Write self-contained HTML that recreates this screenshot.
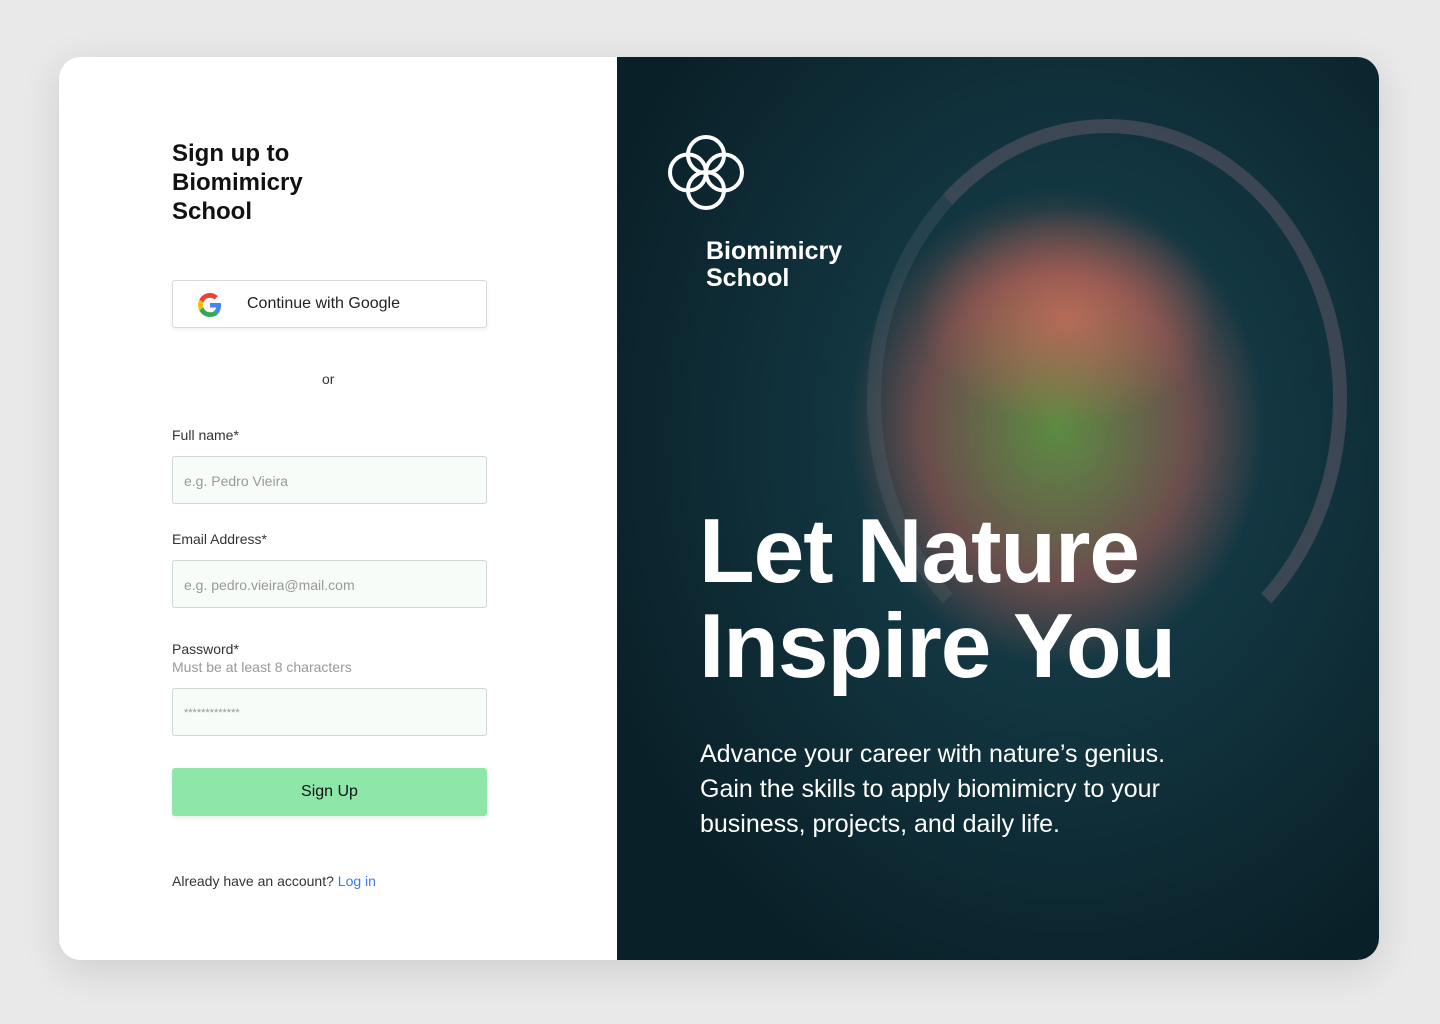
<!DOCTYPE html>
<html><head><meta charset="utf-8"><style>
*{margin:0;padding:0;box-sizing:border-box}
body{width:1440px;height:1024px;background:#e9e9e9;font-family:"Liberation Sans",sans-serif;position:relative;overflow:hidden}
.card{position:absolute;left:59px;top:57px;width:1320px;height:903px;border-radius:22px;overflow:hidden;background:#fff;box-shadow:0 10px 40px rgba(0,0,0,.12)}
.left{position:absolute;left:0;top:0;width:558px;height:903px;background:#fff}
.right{position:absolute;left:558px;top:0;width:762px;height:903px;background:radial-gradient(ellipse 500px 600px at 450px 380px,#1b4450 0%,#123540 45%,#0a2028 100%)}
.abs{position:absolute}
h1{position:absolute;left:113px;top:82px;font-size:24px;line-height:29px;font-weight:700;color:#111}
.gbtn{position:absolute;left:113px;top:223px;width:315px;height:48px;border:1px solid #d8d8d8;border-radius:3px;box-shadow:0 2px 4px rgba(0,0,0,.06);font-size:16px;color:#222}
.lbl{position:absolute;left:113px;font-size:14px;color:#333}
.inp{position:absolute;left:113px;width:315px;height:48px;border:1px solid #cfd8d2;border-radius:3px;background:#f7fcf8;font-size:14px;color:#999;padding:16px 11px}
.btn{position:absolute;left:113px;top:711px;width:315px;height:48px;background:#8ee6a8;border-radius:3px;text-align:center;line-height:48px;font-size:16px;color:#111;box-shadow:0 2px 4px rgba(0,0,0,.08)}
</style></head><body>
<div class="card">
<div class="left">
<h1>Sign up to<br>Biomimicry<br>School</h1>
<div class="gbtn">
<svg class="abs" style="left:25px;top:12px" width="24" height="24" viewBox="0 0 48 48"><path fill="#EA4335" d="M24 9.5c3.5 0 6.6 1.2 9.1 3.6l6.8-6.8C35.8 2.5 30.3 0 24 0 14.6 0 6.6 5.4 2.7 13.3l7.9 6.1C12.5 13.6 17.800 9.5 24 9.5z"/><path fill="#4285F4" d="M46.1 24.5c0-1.6-.1-3.1-.4-4.5H24v9h12.4c-.5 2.9-2.2 5.3-4.6 6.9l7.7 6c4.5-4.2 6.6-10.3 6.6-17.4z"/><path fill="#FBBC05" d="M10.5 28.6c-.5-1.4-.8-3-.8-4.6s.3-3.2.8-4.6l-7.9-6.1C1 16.6 0 20.2 0 24s.9 7.4 2.7 10.7l7.8-6.1z"/><path fill="#34A853" d="M24 48c6.5 0 11.900-2.1 15.9-5.8l-7.7-6c-2.2 1.5-5 2.3-8.2 2.3-6.2 0-11.5-4.2-13.4-9.9l-7.9 6.1C6.6 42.6 14.6 48 24 48z"/></svg>
<span class="abs" style="left:74px;top:14px">Continue with Google</span></div>
<div class="abs" style="left:263px;top:314px;font-size:14px;color:#333">or</div>
<div class="lbl" style="top:370px">Full name*</div>
<div class="inp" style="top:399px">e.g. Pedro Vieira</div>
<div class="lbl" style="top:474px">Email Address*</div>
<div class="inp" style="top:503px">e.g. pedro.vieira@mail.com</div>
<div class="lbl" style="top:584px">Password*</div>
<div class="lbl" style="top:602px;color:#999">Must be at least 8 characters</div>
<div class="inp" style="top:631px;font-size:11px;padding-top:18px">*************</div>
<div class="btn">Sign Up</div>
<div class="lbl" style="top:816px">Already have an account? <span style="color:#3b7ce8">Log in</span></div>
</div>
<div class="right">
<div class="abs" style="left:230px;top:130px;width:420px;height:480px;border-radius:50%;background:radial-gradient(ellipse at 50% 50%,rgba(120,170,60,.7),rgba(210,100,85,.45) 45%,rgba(20,60,70,0) 70%)"></div>
<div class="abs" style="left:300px;top:150px;width:300px;height:220px;border-radius:50%;background:radial-gradient(ellipse,rgba(235,115,95,.6),rgba(230,110,90,0) 70%)"></div>
<div class="abs" style="left:250px;top:62px;width:480px;height:560px;border-radius:50%;border:14px solid rgba(140,110,130,.35);border-bottom-color:transparent;border-left-color:rgba(100,110,120,.25)"></div>
<svg class="abs" style="left:49px;top:76px" width="80" height="80" viewBox="0 0 80 80" fill="none" stroke="#fff" stroke-width="4"><circle cx="40" cy="22" r="18"/><circle cx="40" cy="57" r="18"/><circle cx="22" cy="39.5" r="18"/><circle cx="58" cy="39.5" r="18"/></svg>
<div class="abs" style="left:89px;top:181px;font-size:25px;line-height:27px;font-weight:700;color:#fff">Biomimicry<br>School</div>
<div class="abs" style="left:82px;top:447px;font-size:91px;line-height:95px;font-weight:700;color:#fff;letter-spacing:-1px">Let Nature<br>Inspire You</div>
<div class="abs" style="left:83px;top:680px;font-size:25px;line-height:35px;color:#fff">Advance your career with nature’s genius.<br>Gain the skills to apply biomimicry to your<br>business, projects, and daily life.</div>
</div>
</div>
</body></html>
